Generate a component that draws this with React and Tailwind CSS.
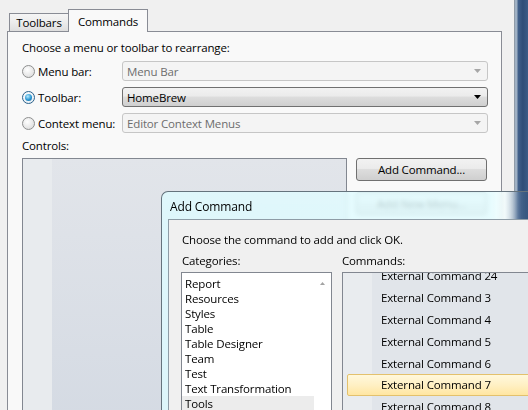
import React from "react";

function Radio({ checked }) {
  return (
    <span
      className={
        "w-[13px] h-[13px] rounded-full border shrink-0 flex items-center justify-center " +
        (checked
          ? "border-[#2c628b] bg-[radial-gradient(circle_at_40%_35%,#ffffff,#dfe9f2)]"
          : "border-[#8e8f8f] bg-[radial-gradient(circle_at_40%_35%,#ffffff,#d6d6d6)]")
      }
    >
      {checked && (
        <span className="w-[7px] h-[7px] rounded-full bg-[radial-gradient(circle_at_40%_35%,#b6ecff,#2a96d2_55%,#0f5f94)]" />
      )}
    </span>
  );
}

function Combo({ text, active }) {
  return (
    <div
      className={
        "w-[366px] h-[20px] rounded-[3px] border flex items-center pl-[4px] pr-[6px] " +
        (active
          ? "border-[#707070] bg-[linear-gradient(#f2f2f2,#ebebeb_45%,#dddddd_50%,#cfcfcf)] text-black"
          : "border-[#c6c6c6] bg-[#f4f4f4] text-[#6d6d6d]")
      }
    >
      <span className="flex-1 truncate">{text}</span>
      <svg width="7" height="4" viewBox="0 0 7 4">
        <path d="M0 0H7L3.5 4Z" fill={active ? "#000000" : "#a6a6a6"} />
      </svg>
    </div>
  );
}

function Button({ children, className = "" }) {
  return (
    <div
      className={
        "w-[131px] h-[23px] rounded-[3px] border border-[#707070] bg-[linear-gradient(#f2f2f2,#ebebeb_45%,#dddddd_50%,#cfcfcf)] flex items-center justify-center text-black " +
        className
      }
    >
      {children}
    </div>
  );
}

const categories = [
  "Report",
  "Resources",
  "Styles",
  "Table",
  "Table Designer",
  "Team",
  "Test",
  "Text Transformation",
  "Tools",
];

const commands = ["24", "3", "4", "5", "6", "7", "8"];

export default function App() {
  return (
    <div className="relative w-[528px] h-[410px] overflow-hidden bg-[#f0f0f0] flex font-['Open_Sans',sans-serif] text-[11.5px] leading-[15px] tracking-[-0.15px] text-black">
      {/* Main window content */}
      <div className="w-[514px] h-full flex flex-col pl-[7px] pt-[9px]">
        <div className="relative z-10 flex items-end h-[22px] pl-[2px]">
          <div className="w-[60px] h-[18px] border border-b-0 border-[#898c95] bg-[linear-gradient(#f5f5f5,#ececec_50%,#dedede)] flex items-center justify-center">
            Toolbars
          </div>
          <div className="-ml-px -mb-px w-[80px] h-[23px] border border-b-0 border-[#898c95] bg-[#f9f9f9] flex items-center justify-center pt-[1px]">
            Commands
          </div>
        </div>
        <div className="w-[495px] flex-1 border border-[#898c95] bg-[#f9f9f9] pl-[14px] pt-[8px] flex flex-col">
          <div>Choose a menu or toolbar to rearrange:</div>
          <div className="mt-[6px] flex flex-col gap-[6px]">
            <div className="h-[20px] flex items-center">
              <div className="w-[100px] flex items-center gap-[3px]">
                <Radio />
                <span>Menu bar:</span>
              </div>
              <Combo text="Menu Bar" />
            </div>
            <div className="h-[20px] flex items-center">
              <div className="w-[100px] flex items-center gap-[3px]">
                <Radio checked />
                <span>Toolbar:</span>
              </div>
              <Combo text="HomeBrew" active />
            </div>
            <div className="h-[20px] flex items-center">
              <div className="w-[100px] flex items-center gap-[3px]">
                <Radio />
                <span>Context menu:</span>
              </div>
              <Combo text="Editor Context Menus" />
            </div>
          </div>
          <div className="mt-[5px]">Controls:</div>
          <div className="mt-[5px] flex gap-[9px]">
            <div className="w-[325px] h-[270px] border border-[#828790] flex">
              <div className="w-[29px] bg-[#e8ebee]" />
              <div className="flex-1 bg-[linear-gradient(#e2e5ea,#d4dae3)]" />
            </div>
            <div className="flex flex-col">
              <Button>Add Command...</Button>
              <Button className="mt-[11px]">Add New Menu...</Button>
            </div>
          </div>
        </div>
      </div>

      {/* Window frame strip */}
      <div className="w-[14px] h-full border-l border-[#8f9ba7] bg-[linear-gradient(to_right,#9fb1c4_0px,#9fb1c4_2px,#41618b_3px,#2f4d77_60%,#3b5b86_100%)]" />

      {/* Add Command dialog */}
      <div className="absolute left-[161px] top-[191px] w-[380px] h-[230px] rounded-tl-[7px] border-l border-t border-[#65737d] overflow-hidden flex flex-col backdrop-blur-[2px] bg-[linear-gradient(to_right,rgba(222,251,255,0.82)_0px,rgba(226,252,255,0.82)_328px,rgba(244,255,255,0.75)_343px,rgba(90,120,158,0.55)_356px,rgba(55,85,125,0.6)_366px)]">
        <div className="h-[27px] shrink-0 flex items-center pl-[8px] pt-[1px] text-[12px]">Add Command</div>
        <div className="flex-1 ml-[6px] border-l border-t border-[#8e9ca6] bg-[#f0f0f0] pl-[12px] pt-[12px] flex flex-col">
          <div className="pl-[1px]">Choose the command to add and click OK.</div>
          <div className="mt-[6px] flex pl-[1px]">
            <div className="w-[160px]">Categories:</div>
            <div>Commands:</div>
          </div>
          <div className="mt-[4px] flex gap-[10px]">
            <div className="w-[151px] h-[160px] border border-[#828790] bg-white flex">
              <div className="flex-1 flex flex-col pt-[3px]">
                {categories.map((c) => (
                  <div
                    key={c}
                    className={
                      "h-[15px] shrink-0 pl-[3px] flex items-center leading-[14px] " +
                      (c === "Tools" ? "bg-[#ececec]" : "")
                    }
                  >
                    {c}
                  </div>
                ))}
              </div>
              <div className="w-[17px] flex justify-center pt-[9px]">
                <svg width="5" height="3" viewBox="0 0 5 3">
                  <path d="M0 3L2.5 0L5 3Z" fill="#a3a3a3" />
                </svg>
              </div>
            </div>
            <div className="flex-1 h-[160px] border border-[#828790] relative overflow-hidden flex">
              <div className="w-[29px] bg-[#e9ecef]" />
              <div className="flex-1 bg-[#e1e5ea]" />
              <div className="absolute inset-x-0 top-[-8px] flex flex-col">
                {commands.map((n) =>
                  n === "7" ? (
                    <div
                      key={n}
                      className="h-[21.8px] ml-[4px] rounded-[2px] border border-[#e3c16d] bg-[linear-gradient(#fff8dc,#fff0c4_50%,#ffe6a1)] flex items-center pl-[33px]"
                    >
                      External Command {n}
                    </div>
                  ) : (
                    <div key={n} className="h-[21.8px] flex items-center pl-[38px]">
                      External Command {n}
                    </div>
                  )
                )}
              </div>
            </div>
          </div>
        </div>
      </div>
    </div>
  );
}
